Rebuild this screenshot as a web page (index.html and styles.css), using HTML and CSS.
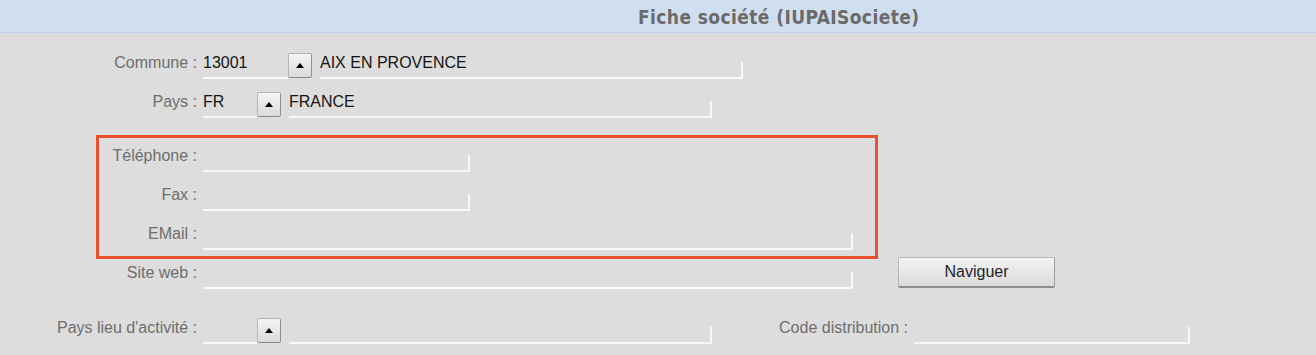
FILE: index.html
```html
<!DOCTYPE html>
<html lang="fr">
<head>
<meta charset="utf-8">
<title>Fiche société</title>
<link rel="stylesheet" href="styles.css">
</head>
<body>
<header class="titlebar"><h1 class="title">Fiche société (IUPAISociete)</h1></header>
<main class="form">
  <div class="row r1">
    <span class="lbl">Commune :</span>
    <span class="f code w85"><span class="v">13001</span></span>
    <button class="up" type="button"><svg width="8" height="5" viewBox="0 0 8 5"><polygon points="4,0 8,5 0,5" fill="#000"/></svg></button>
    <span class="f name"><span class="v">AIX EN PROVENCE</span></span>
  </div>
  <div class="row r1">
    <span class="lbl">Pays :</span>
    <span class="f code w54"><span class="v">FR</span></span>
    <button class="up" type="button"><svg width="8" height="5" viewBox="0 0 8 5"><polygon points="4,0 8,5 0,5" fill="#000"/></svg></button>
    <span class="f name"><span class="v">FRANCE</span></span>
  </div>
  <section class="highlight">
    <div class="row rt">
      <span class="lbl in">Téléphone :</span>
      <span class="f short"></span>
    </div>
    <div class="row r1">
      <span class="lbl in">Fax :</span>
      <span class="f short"></span>
    </div>
    <div class="row r1">
      <span class="lbl in">EMail :</span>
      <span class="f long"></span>
    </div>
  </section>
  <div class="row rs">
    <span class="lbl">Site web :</span>
    <span class="f long"></span>
    <button class="btn" type="button">Naviguer</button>
  </div>
  <div class="row rp">
    <span class="lbl">Pays lieu d'activité :</span>
    <span class="f code w54"></span>
    <button class="up low" type="button"><svg width="8" height="5" viewBox="0 0 8 5"><polygon points="4,0 8,5 0,5" fill="#000"/></svg></button>
    <span class="f name"></span>
    <span class="lbl cd">Code distribution :</span>
    <span class="f dist"></span>
  </div>
</main>
</body>
</html>
```
FILE: styles.css
```css
html, body {
  margin: 0;
  padding: 0;
}
body {
  width: 1316px;
  height: 355px;
  overflow: hidden;
  background: #dddddd;
  font-family: "Liberation Sans", Arial, sans-serif;
  font-size: 16px;
}
.titlebar {
  height: 32px;
  background: #d0dff0;
  border-bottom: 1px solid #bfd0e6;
  padding-left: 638px;
}
.title {
  margin: 0;
  font-family: "DejaVu Sans Condensed", "DejaVu Sans", sans-serif;
  font-weight: bold;
  font-size: 19px;
  letter-spacing: 0.4px;
  line-height: 34px;
  color: #6a6a6a;
}
.form {
  padding-top: 7px;
}
.row {
  display: flex;
  align-items: flex-end;
  height: 39px;
}
.rt { height: 34px; }
.rs { height: 30px; }
.rp { height: 55px; }
.lbl {
  flex: none;
  width: 197px;
  box-sizing: border-box;
  text-align: right;
  color: #6e6e6e;
  line-height: 18px;
  padding-bottom: 7px;
  white-space: nowrap;
}
.lbl.in { width: 98px; }
.lbl.cd { width: 196px; }
.f {
  flex: none;
  display: block;
  box-sizing: border-box;
  height: 17px;
  border-bottom: 2px solid #f8f8f8;
  border-right: 2px solid #f8f8f8;
  margin-left: 6px;
}
.v {
  display: block;
  line-height: 18px;
  margin-top: -8px;
  color: #141414;
  white-space: nowrap;
}
.code { border-right: none; }
.w85 { width: 85px; }
.w54 { width: 54px; }
.name { width: 423px; margin-left: 8px; }
.short { width: 267px; }
.long { width: 650px; }
.dist { width: 276px; }
.up {
  flex: none;
  width: 24px;
  height: 25px;
  margin: 0 0 1px 0;
  padding: 0;
  display: flex;
  align-items: center;
  justify-content: center;
  background: linear-gradient(#f5f5f5, #dadada);
  border: 1px solid #b4b4b4;
  border-right-color: #8f8f8f;
  border-bottom-color: #8a8a8a;
  border-radius: 2px;
}
.up.low { margin-bottom: 1px; }
.highlight {
  margin: 17px 0 0 96px;
  width: 782px;
  box-sizing: border-box;
  border: 3px solid #e8502e;
  padding-bottom: 6px;
}
.btn {
  flex: none;
  margin: 0 0 1px 45px;
  width: 157px;
  height: 31px;
  padding: 0;
  font-family: "Liberation Sans", Arial, sans-serif;
  font-size: 16px;
  color: #1e1e2a;
  background: linear-gradient(#f3f3f3, #dbdbdb);
  border: 1px solid #b8b8b8;
  border-bottom: 2px solid #8c8c8c;
  border-right-color: #9a9a9a;
  border-radius: 2px;
}
```
